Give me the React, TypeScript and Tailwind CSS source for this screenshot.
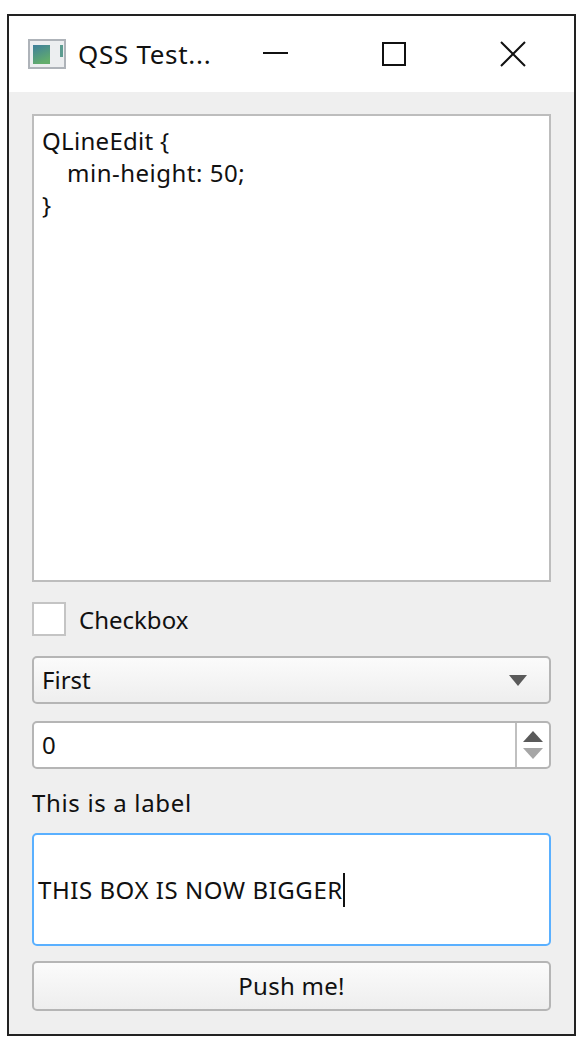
export default function App() {
  const font = "font-['Noto_Sans','DejaVu_Sans',sans-serif]";
  return (
    <div className={`min-h-[1045px] w-[586px] bg-white pl-[7px] pt-[14px] text-[24px] leading-[32px] text-[#111] ${font}`}>
      <div className="flex h-[1022px] w-[569px] flex-col border-2 border-[#222] bg-[#efefef]">
        <div className="flex h-[76px] shrink-0 items-center bg-white">
          <svg className="ml-[19px] h-[30px] w-[38px] shrink-0" viewBox="0 0 38 30">
            <rect x="1" y="1" width="36" height="28" fill="#eceef0" stroke="#aeb3b9" strokeWidth="2" />
            <defs>
              <linearGradient id="g" x1="0" y1="0" x2="0.4" y2="1">
                <stop offset="0" stopColor="#3f7f9c" />
                <stop offset="1" stopColor="#62ad6c" />
              </linearGradient>
            </defs>
            <rect x="5" y="6" width="17" height="19" fill="url(#g)" />
            <rect x="32" y="6" width="3" height="12" fill="#5c9c90" />
          </svg>
          <span className="ml-[12px] w-[154px] shrink-0 whitespace-nowrap text-[26px] tracking-[0.7px]">QSS Test...</span>
          <svg className="ml-[31px] h-[26px] w-[26px] shrink-0" viewBox="0 0 26 26">
            <path d="M0 12H25" stroke="#111" strokeWidth="2" fill="none" />
          </svg>
          <svg className="ml-[92px] h-[26px] w-[26px] shrink-0" viewBox="0 0 26 26">
            <rect x="2" y="2" width="22" height="22" stroke="#111" strokeWidth="2" fill="none" />
          </svg>
          <svg className="ml-[93px] h-[26px] w-[26px] shrink-0" viewBox="0 0 26 26">
            <path d="M1 1L25 25M25 1L1 25" stroke="#111" strokeWidth="2" fill="none" />
          </svg>
        </div>
        <div className="flex flex-1 flex-col px-[23px] pt-[22px]">
          <div className="h-[468px] shrink-0 border-2 border-[#bdbdbd] bg-white pl-[8px] pt-[9px]">
            <div className="tracking-[0.3px]">QLineEdit {"{"}</div>
            <div className="pl-[25px] tracking-[0.5px]">min-height: 50;</div>
            <div>{"}"}</div>
          </div>
          <div className="mt-[20px] flex h-[34px] shrink-0 items-center">
            <div className="h-[34px] w-[34px] border-2 border-[#c4c4c4] bg-white" />
            <span className="ml-[13px] pt-[1px]">Checkbox</span>
          </div>
          <div className="mt-[20px] flex h-[48px] shrink-0 items-center justify-between rounded-[5px] border-2 border-[#b5b5b5] bg-gradient-to-b from-[#fbfbfb] to-[#eeeeee] pl-[8px] pr-[22px]">
            <span>First</span>
            <svg className="h-[11px] w-[18px]" viewBox="0 0 18 11">
              <path d="M0 0H18L9 11Z" fill="#5a5a5a" />
            </svg>
          </div>
          <div className="mt-[17px] flex h-[48px] shrink-0 items-stretch rounded-[5px] border-2 border-[#b5b5b5] bg-white">
            <span className="flex flex-1 items-center pl-[8px]">0</span>
            <div className="flex w-[34px] flex-col items-center justify-center gap-[6px] border-l-2 border-[#c0c0c0]">
              <svg className="h-[11px] w-[20px]" viewBox="0 0 20 11">
                <path d="M10 0L20 11H0Z" fill="#5a5a5a" />
              </svg>
              <svg className="h-[11px] w-[20px]" viewBox="0 0 20 11">
                <path d="M0 0H20L10 11Z" fill="#a6a6a6" />
              </svg>
            </div>
          </div>
          <div className="mt-[18px] h-[32px] shrink-0 tracking-[0.66px]">This is a label</div>
          <div className="mt-[14px] flex h-[113px] shrink-0 items-center rounded-[5px] border-2 border-[#5ab0ff] bg-white pl-[4px]">
            <span className="whitespace-nowrap tracking-[0.55px]">THIS BOX IS NOW BIGGER</span>
            <span className="h-[34px] w-[2px] bg-[#111]" />
          </div>
          <div className="mt-[15px] flex h-[50px] shrink-0 items-center justify-center rounded-[5px] border-2 border-[#b5b5b5] bg-gradient-to-b from-[#fbfbfb] to-[#eeeeee] tracking-[0.25px]">
            Push me!
          </div>
        </div>
      </div>
    </div>
  );
}
